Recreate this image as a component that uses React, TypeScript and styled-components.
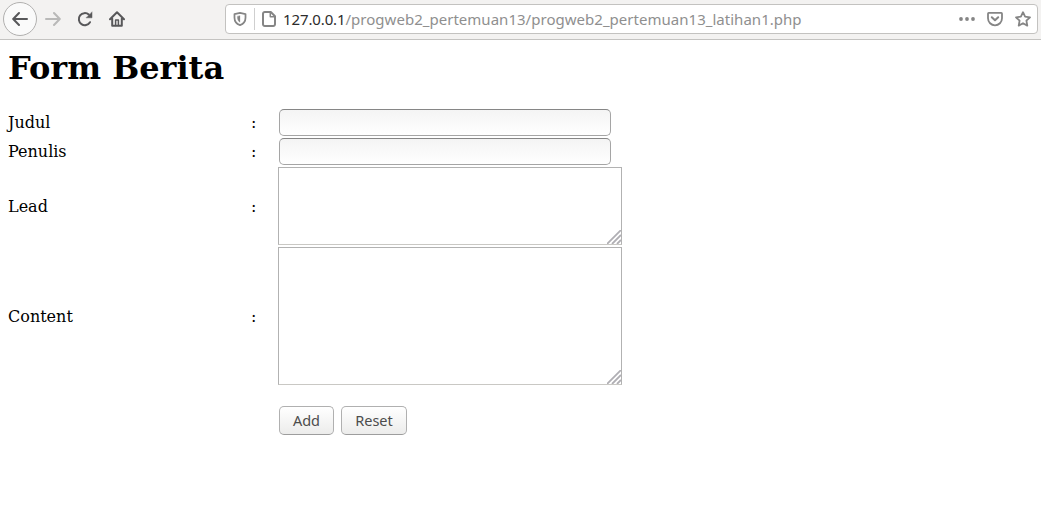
import React from 'react';
import styled, { createGlobalStyle } from 'styled-components';

const GlobalStyle = createGlobalStyle`
  * { box-sizing: border-box; }
  body { margin: 0; background: #fff; color: #000; font-family: "DejaVu Serif", serif; font-size: 16px; overflow: hidden; }
`;

const Toolbar = styled.header`
  display: flex;
  align-items: center;
  height: 40px;
  padding: 0 3px 2px;
  background: #f3f2f1;
  border-bottom: 1px solid #c4c3c1;
`;

const NavButtons = styled.nav`
  display: flex;
  align-items: center;
  width: 222px;
`;

const NavButton = styled.button<{ $round?: boolean; $muted?: boolean }>`
  display: flex;
  align-items: center;
  justify-content: center;
  width: ${p => (p.$round ? 34 : 32)}px;
  height: 34px;
  padding: 0;
  border: ${p => (p.$round ? '1px solid #b1b0af' : '0')};
  border-radius: 50%;
  background: ${p => (p.$round ? '#fafafa' : 'transparent')};
  color: ${p => (p.$muted ? '#b9b9b8' : '#58585a')};
`;

const AddressBar = styled.div`
  display: flex;
  align-items: center;
  flex: 1;
  height: 30px;
  margin-top: 1px;
  padding: 0 6px 0 7px;
  border: 1px solid #c3c2c0;
  border-radius: 4px;
  background: #fff;
  color: #858585;
`;

const Divider = styled.span`
  width: 1px;
  height: 22px;
  margin: 0 6px 0 7px;
  background: #cfcfcf;
`;

const Url = styled.span`
  flex: 1;
  margin-left: 6px;
  font: 15px/22px "Noto Sans", sans-serif;
  letter-spacing: 0.025px;
  white-space: nowrap;
  color: #8f8f8f;
`;

const Host = styled.span`
  letter-spacing: -0.12px;
  color: #2c2c2c;
`;

const Actions = styled.div`
  display: flex;
  align-items: center;
  gap: 12px;
`;

const Page = styled.main`
  padding: 9px 8px;
`;

const Title = styled.h1`
  margin: 0 0 22px;
  font-size: 32px;
  line-height: 38px;
`;

const Form = styled.form`
  display: flex;
  flex-direction: column;
  gap: 2px;
`;

const Row = styled.div`
  display: grid;
  grid-template-columns: 243px 27px auto;
  align-items: center;
  justify-content: start;
  line-height: 19px;
`;

const TextInput = styled.input`
  width: 332px;
  height: 27px;
  margin: 0 0 0 1px;
  padding: 4px 6px;
  border: 1px solid #a5a5a5;
  border-top-color: #868686;
  border-radius: 5px;
  background: linear-gradient(#f4f4f4, #fff);
  outline: 0;
`;

const AreaFrame = styled.div`
  position: relative;
  display: flex;
`;

const TextArea = styled.textarea<{ $height: number }>`
  width: 344px;
  height: ${p => p.$height}px;
  margin: 0;
  border: 1px solid #b2b2b2;
  border-bottom-color: #c9c8c4;
  resize: none;
  outline: 0;
`;

const Grip = styled.svg`
  position: absolute;
  right: 1px;
  bottom: 1px;
`;

const Buttons = styled.div`
  display: flex;
  gap: 7px;
  margin: 19px 0 0 271px;
`;

const FormButton = styled.button<{ $width: number }>`
  width: ${p => p.$width}px;
  height: 29px;
  padding: 0 0 2px;
  border: 1px solid #b0b0b0;
  border-bottom-color: #9d9d9d;
  border-radius: 5px;
  background: linear-gradient(#fff, #ececeb);
  color: #4c4c4c;
  font: 14.5px/20px "Noto Sans", sans-serif;
`;

const Icon = ({ children, size = 16, width = 2 }: { children: React.ReactNode; size?: number; width?: number }) => (
  <svg width={size} height={size} viewBox="0 0 16 16" fill="none" stroke="currentColor" strokeWidth={width} strokeLinecap="round" strokeLinejoin="round">
    {children}
  </svg>
);

const Field = ({ label, children }: { label: string; children: React.ReactNode }) => (
  <Row>
    <span>{label}</span>
    <span>:</span>
    {children}
  </Row>
);

const Area = ({ height }: { height: number }) => (
  <AreaFrame>
    <TextArea $height={height} />
    <Grip width="14" height="14" viewBox="0 0 14 14" stroke="#b0afb4" strokeWidth="1.8">
      <path d="M0 14L14 0M5 14L14 5M10 14L14 10" />
    </Grip>
  </AreaFrame>
);

export default function App() {
  return (
    <>
      <GlobalStyle />
      <Toolbar>
        <NavButtons>
          <NavButton $round aria-label="Back">
            <Icon><path d="M15 8H1.5M7 2L1.2 8L7 14" /></Icon>
          </NavButton>
          <NavButton $muted aria-label="Forward">
            <Icon><path d="M1 8H14.5M9 2L14.8 8L9 14" /></Icon>
          </NavButton>
          <NavButton aria-label="Reload">
            <Icon>
              <path d="M13 11.2A6 6 0 1 1 11.8 3.6" />
              <path d="M15 1.2V6.8H9.4Z" fill="currentColor" strokeWidth="0.5" />
            </Icon>
          </NavButton>
          <NavButton aria-label="Home">
            <Icon>
              <path d="M1 8.2L8 1.2L15 8.2M3.2 7.5V14.8H12.8V7.5" />
              <path d="M6.6 14.5V8.9H9.4V14.5" strokeWidth="1.5" />
            </Icon>
          </NavButton>
        </NavButtons>
        <AddressBar>
          <Icon size={14}>
            <path d="M8 1L14.3 2.4V6.5C14.3 10.5 12 13.5 8 15C4 13.5 1.7 10.5 1.7 6.5V2.4Z" />
            <path d="M8 4.3V11.8C6 10.4 5 8.4 5 6.5V5Z" fill="currentColor" strokeWidth="0.3" />
          </Icon>
          <Divider />
          <Icon size={16}>
            <path d="M3.8 1H9.8L14 5.2V13.2A1.8 1.8 0 0 1 12.2 15H3.8A1.8 1.8 0 0 1 2 13.2V2.8A1.8 1.8 0 0 1 3.8 1Z" />
            <path d="M9.3 1.5V5.7H13.5" strokeWidth="1.5" />
          </Icon>
          <Url><Host>127.0.0.1</Host>/progweb2_pertemuan13/progweb2_pertemuan13_latihan1.php</Url>
          <Actions>
            <Icon>
              <g fill="currentColor" stroke="none">
                <circle cx="2" cy="8" r="1.9" /><circle cx="8" cy="8" r="1.9" /><circle cx="14" cy="8" r="1.9" />
              </g>
            </Icon>
            <Icon>
              <path d="M1.8 1.8H14.2A.9 .9 0 0 1 15 2.7V7.3A7 7 0 0 1 1 7.3V2.7A.9 .9 0 0 1 1.8 1.8Z" strokeWidth="1.8" />
              <path d="M4.8 6.2L8 9.3L11.2 6.2" />
            </Icon>
            <Icon width={1.8}>
              <path d="M8 1.2L10.1 5.7L15 6.3L11.4 9.7L12.3 14.6L8 12.2L3.7 14.6L4.6 9.7L1 6.3L5.9 5.7Z" />
            </Icon>
          </Actions>
        </AddressBar>
      </Toolbar>
      <Page>
        <Title>Form Berita</Title>
        <Form>
          <Field label="Judul"><TextInput /></Field>
          <Field label="Penulis"><TextInput /></Field>
          <Field label="Lead"><Area height={78} /></Field>
          <Field label="Content"><Area height={138} /></Field>
          <Buttons>
            <FormButton type="button" $width={55}>Add</FormButton>
            <FormButton type="reset" $width={66}>Reset</FormButton>
          </Buttons>
        </Form>
      </Page>
    </>
  );
}
